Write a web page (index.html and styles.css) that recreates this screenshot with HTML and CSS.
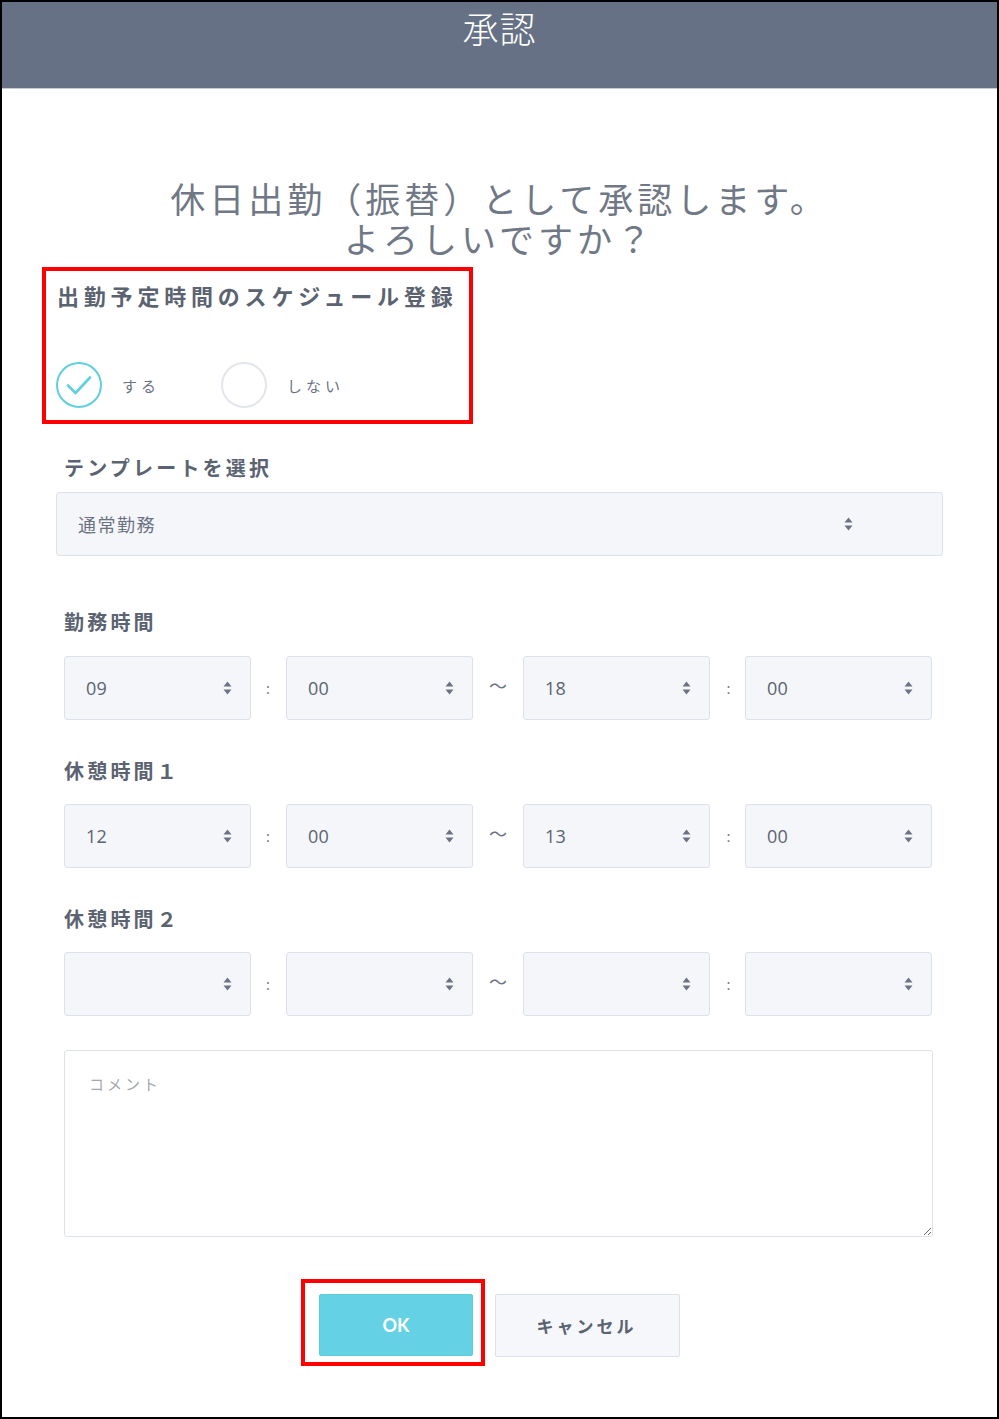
FILE: index.html
```html
<!DOCTYPE html>
<html lang="ja">
<head>
<meta charset="utf-8">
<title>承認</title>
<link rel="stylesheet" href="styles.css">
</head>
<body>
<div class="frame">
  <div class="header">承認</div>
  <div class="content">
    <div class="message">
      <p class="msg-line">休日出勤（振替）として承認します。</p>
      <p class="msg-line">よろしいですか？</p>
    </div>

    <div class="schedule">
      <div class="schedule-label">出勤予定時間のスケジュール登録</div>
      <div class="radios">
        <div class="radio radio-on">
          <span class="circle">
            <svg width="46" height="46" viewBox="0 0 46 46"><path d="M12 23.5 L19.5 31 L34 15.5" fill="none" stroke="#5fcfe1" stroke-width="2.6" stroke-linecap="round" stroke-linejoin="round"/></svg>
          </span>
          <span class="radio-text">する</span>
        </div>
        <div class="radio">
          <span class="circle"></span>
          <span class="radio-text">しない</span>
        </div>
      </div>
    </div>

    <div class="label label-template">テンプレートを選択</div>
    <div class="select select-wide">
      <span class="select-text">通常勤務</span>
      <svg class="arrows" width="9" height="14" viewBox="0 0 9 14"><path d="M4.5 0.5 L8.5 5.5 L0.5 5.5 Z M4.5 13.5 L8.5 8.5 L0.5 8.5 Z" fill="#6b7382"/></svg>
    </div>

    <div class="label label-first">勤務時間</div>
    <div class="time-row">
      <div class="select time"><span class="select-text num">09</span><svg class="arrows" width="9" height="14" viewBox="0 0 9 14"><path d="M4.5 0.5 L8.5 5.5 L0.5 5.5 Z M4.5 13.5 L8.5 8.5 L0.5 8.5 Z" fill="#6b7382"/></svg></div>
      <span class="sep colon">:</span>
      <div class="select time"><span class="select-text num">00</span><svg class="arrows" width="9" height="14" viewBox="0 0 9 14"><path d="M4.5 0.5 L8.5 5.5 L0.5 5.5 Z M4.5 13.5 L8.5 8.5 L0.5 8.5 Z" fill="#6b7382"/></svg></div>
      <span class="sep tilde">〜</span>
      <div class="select time"><span class="select-text num">18</span><svg class="arrows" width="9" height="14" viewBox="0 0 9 14"><path d="M4.5 0.5 L8.5 5.5 L0.5 5.5 Z M4.5 13.5 L8.5 8.5 L0.5 8.5 Z" fill="#6b7382"/></svg></div>
      <span class="sep colon colon-r">:</span>
      <div class="select time"><span class="select-text num">00</span><svg class="arrows" width="9" height="14" viewBox="0 0 9 14"><path d="M4.5 0.5 L8.5 5.5 L0.5 5.5 Z M4.5 13.5 L8.5 8.5 L0.5 8.5 Z" fill="#6b7382"/></svg></div>
    </div>

    <div class="label">休憩時間１</div>
    <div class="time-row">
      <div class="select time"><span class="select-text num">12</span><svg class="arrows" width="9" height="14" viewBox="0 0 9 14"><path d="M4.5 0.5 L8.5 5.5 L0.5 5.5 Z M4.5 13.5 L8.5 8.5 L0.5 8.5 Z" fill="#6b7382"/></svg></div>
      <span class="sep colon">:</span>
      <div class="select time"><span class="select-text num">00</span><svg class="arrows" width="9" height="14" viewBox="0 0 9 14"><path d="M4.5 0.5 L8.5 5.5 L0.5 5.5 Z M4.5 13.5 L8.5 8.5 L0.5 8.5 Z" fill="#6b7382"/></svg></div>
      <span class="sep tilde">〜</span>
      <div class="select time"><span class="select-text num">13</span><svg class="arrows" width="9" height="14" viewBox="0 0 9 14"><path d="M4.5 0.5 L8.5 5.5 L0.5 5.5 Z M4.5 13.5 L8.5 8.5 L0.5 8.5 Z" fill="#6b7382"/></svg></div>
      <span class="sep colon colon-r">:</span>
      <div class="select time"><span class="select-text num">00</span><svg class="arrows" width="9" height="14" viewBox="0 0 9 14"><path d="M4.5 0.5 L8.5 5.5 L0.5 5.5 Z M4.5 13.5 L8.5 8.5 L0.5 8.5 Z" fill="#6b7382"/></svg></div>
    </div>

    <div class="label">休憩時間２</div>
    <div class="time-row">
      <div class="select time"><span class="select-text num"></span><svg class="arrows" width="9" height="14" viewBox="0 0 9 14"><path d="M4.5 0.5 L8.5 5.5 L0.5 5.5 Z M4.5 13.5 L8.5 8.5 L0.5 8.5 Z" fill="#6b7382"/></svg></div>
      <span class="sep colon">:</span>
      <div class="select time"><span class="select-text num"></span><svg class="arrows" width="9" height="14" viewBox="0 0 9 14"><path d="M4.5 0.5 L8.5 5.5 L0.5 5.5 Z M4.5 13.5 L8.5 8.5 L0.5 8.5 Z" fill="#6b7382"/></svg></div>
      <span class="sep tilde">〜</span>
      <div class="select time"><span class="select-text num"></span><svg class="arrows" width="9" height="14" viewBox="0 0 9 14"><path d="M4.5 0.5 L8.5 5.5 L0.5 5.5 Z M4.5 13.5 L8.5 8.5 L0.5 8.5 Z" fill="#6b7382"/></svg></div>
      <span class="sep colon colon-r">:</span>
      <div class="select time"><span class="select-text num"></span><svg class="arrows" width="9" height="14" viewBox="0 0 9 14"><path d="M4.5 0.5 L8.5 5.5 L0.5 5.5 Z M4.5 13.5 L8.5 8.5 L0.5 8.5 Z" fill="#6b7382"/></svg></div>
    </div>

    <textarea class="comment" placeholder="コメント"></textarea>

    <div class="buttons">
      <div class="ok-wrap"><button class="btn btn-ok">OK</button></div>
      <button class="btn btn-cancel">キャンセル</button>
    </div>
  </div>
</div>
</body>
</html>
```

FILE: styles.css
```css
html, body {
  margin: 0;
  padding: 0;
  background: #fff;
}

body {
  font-family: "Lato", "Noto Sans CJK JP", sans-serif;
}

.frame {
  width: 999px;
  height: 1419px;
  box-sizing: border-box;
  border: 2px solid #000;
  background: #fff;
  overflow: hidden;
}

.header {
  height: 86px;
  background: #667185;
  border-bottom: 1px solid #c6cbd3;
  color: #fff;
  text-align: center;
  font-family: "Noto Sans CJK JP", sans-serif;
  font-weight: 300;
  font-size: 36px;
  line-height: 50px;
  letter-spacing: 1px;
}

.content {
  padding-left: 54px;
}

.message {
  margin: 89px 0 0 -54px;
  text-align: center;
  font-family: "Noto Sans CJK JP", sans-serif;
  font-weight: 400;
  font-size: 35px;
  letter-spacing: 4px;
  color: #717885;
}

.msg-line {
  margin: 0;
  height: 40px;
  line-height: 40px;
}

.schedule {
  margin: 9px 0 0 -14px;
  width: 431px;
  height: 157px;
  box-sizing: border-box;
  border: 4px solid #ff0000;
  padding: 9px 0 0 10px;
}

.schedule-label {
  font-family: "Noto Sans CJK JP", sans-serif;
  font-weight: 700;
  font-size: 22px;
  line-height: 30px;
  letter-spacing: 4.8px;
  color: #5b6371;
  padding-left: 1px;
}

.radios {
  display: flex;
  margin-top: 52px;
}

.radio {
  display: flex;
  align-items: center;
}

.radio-on {
  width: 165px;
}

.circle {
  width: 46px;
  height: 46px;
  box-sizing: border-box;
  border: 2px solid #e2e5ea;
  border-radius: 50%;
  display: flex;
  align-items: center;
  justify-content: center;
}

.circle svg {
  display: block;
  flex: none;
}

.radio-on .circle {
  border-color: #5fcfe1;
}

.radio-text {
  margin-left: 20px;
  font-family: "Noto Sans CJK JP", sans-serif;
  font-size: 15px;
  letter-spacing: 4px;
  color: #6b7382;
}

.label {
  margin: 39px 0 0 8px;
  font-family: "Noto Sans CJK JP", sans-serif;
  font-weight: 700;
  font-size: 20px;
  line-height: 24px;
  letter-spacing: 3.2px;
  color: #5b6371;
}

.label-template {
  margin-top: 32px;
}

.label-first {
  margin-top: 54px;
}

.select {
  box-sizing: border-box;
  height: 64px;
  background: #f5f6fa;
  border: 1px solid #dde1ea;
  border-radius: 3px;
  display: flex;
  align-items: center;
}

.select-wide {
  margin-top: 12px;
  width: 887px;
  padding: 0 89px 0 21px;
}

.select-text {
  flex: 1;
  font-family: "Noto Sans CJK JP", sans-serif;
  font-size: 18px;
  letter-spacing: 1.5px;
  color: #6b7382;
}

.select-text.num {
  font-family: "Open Sans", "Noto Sans CJK JP", sans-serif;
  font-size: 18px;
  letter-spacing: 0.3px;
  color: #5b6371;
}

.arrows {
  display: block;
  flex: none;
}

.time-row {
  display: flex;
  align-items: center;
  margin: 21px 0 0 8px;
}

.label-first + .time-row {
  margin-top: 22px;
}

.time {
  width: 187px;
  padding: 0 18px 0 21px;
}

.sep {
  text-align: center;
  color: #6b7382;
}

.colon {
  width: 35px;
  font-family: "Open Sans", sans-serif;
  font-size: 15px;
  padding-right: 1px;
  box-sizing: border-box;
}

.colon-r {
  padding-right: 0;
  padding-left: 2px;
}

.tilde {
  width: 50px;
  font-family: "Noto Sans CJK JP", sans-serif;
  font-size: 18px;
  margin-top: -6px;
}

.comment {
  display: block;
  margin: 34px 0 0 8px;
  width: 869px;
  height: 187px;
  box-sizing: border-box;
  border: 1px solid #dde1ea;
  border-radius: 3px;
  background: #fff;
  padding: 21px 24px;
  font-family: "Noto Sans CJK JP", sans-serif;
  font-size: 15px;
  line-height: 24px;
  letter-spacing: 3px;
  color: #555;
  resize: both;
}

.comment::placeholder {
  color: #a3a7ae;
}

.buttons {
  margin: 57px 0 0 -54px;
  display: flex;
  justify-content: center;
  align-items: flex-start;
  gap: 22px;
}

.ok-wrap {
  position: relative;
}

.ok-wrap::after {
  content: "";
  position: absolute;
  left: -18px;
  right: -12px;
  top: -15px;
  bottom: -10px;
  border: 4px solid #ff0000;
}

.btn {
  display: block;
  box-sizing: border-box;
  margin: 0;
  border-radius: 2px;
  font-weight: 700;
  cursor: pointer;
}

.btn-ok {
  width: 154px;
  height: 62px;
  background: #64d2e4;
  border: 1px solid #5ccbdc;
  color: #fff;
  font-family: "Lato", "Noto Sans CJK JP", sans-serif;
  font-size: 18px;
}

.btn-cancel {
  width: 185px;
  height: 63px;
  background: #f6f7fa;
  border: 1px solid #dde1ea;
  color: #5b6371;
  font-family: "Noto Sans CJK JP", sans-serif;
  font-size: 17px;
  letter-spacing: 3px;
  padding-left: 4px;
}
```
